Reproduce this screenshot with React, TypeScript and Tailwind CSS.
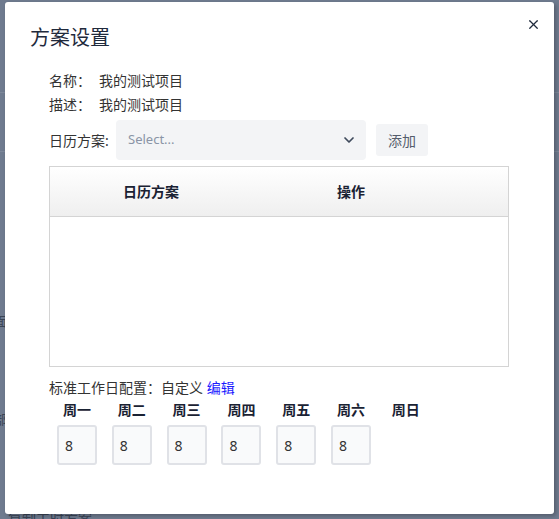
import React from 'react';
import { ChevronDown, X } from 'lucide-react';

const days = ['周一', '周二', '周三', '周四', '周五', '周六', '周日'];
const hours = ['8', '8', '8', '8', '8', '8'];

const font = { fontFamily: '"Noto Sans", "Noto Sans CJK SC", sans-serif' };

const App: React.FC = () => {
  return (
    <div className="relative w-[559px] h-[519px] overflow-hidden bg-[#6f7b8f]" style={font}>
      {/* dimmed page behind the dialog */}
      <div className="absolute inset-0">
        <div className="h-[93px] border-b border-[#7d889a]" />
        <div className="h-[59px] border-b border-[#7d889a]" />
        <div className="absolute left-[-6px] top-[312px] text-[13px] text-[#3a4456]">面</div>
        <div className="absolute left-[-6px] top-[410px] text-[13px] text-[#3a4456]">部</div>
        <div className="absolute left-[8px] top-[508px] text-[14px] text-[#3a4456]">复制工时方案</div>
      </div>

      {/* dialog */}
      <div className="absolute left-[5px] top-[2px] w-[549px] h-[512px] bg-white rounded-[3px] shadow-[2px_2px_4px_rgba(0,0,0,0.25)]">
        <button className="absolute right-[13px] top-[15px] text-[#1f2a3c]">
          <X size={15} strokeWidth={2} />
        </button>

        <div className="pl-[25px] pt-[22px]">
          <h2 className="text-[20px] leading-[28px] text-[#1f2a3c]">方案设置</h2>
        </div>

        <div className="pl-[44px] pt-[16px] text-[14px] text-[#333]">
          <div className="flex h-[24px] items-center">
            <span className="w-[50px]">名称：</span>
            <span>我的测试项目</span>
          </div>
          <div className="flex h-[24px] items-center">
            <span className="w-[50px]">描述：</span>
            <span>我的测试项目</span>
          </div>

          <div className="mt-[4px] flex items-center">
            <span className="w-[67px]">日历方案:</span>
            <div className="flex h-[40px] w-[250px] items-center justify-between rounded-[4px] bg-[#f3f4f6] pl-[12px] pr-[9px]">
              <span className="text-[13px] text-[#8a94a6]">Select...</span>
              <ChevronDown size={16} strokeWidth={2.6} className="text-[#3f4a5c]" />
            </div>
            <button className="ml-[10px] h-[32px] w-[52px] rounded-[3px] bg-[#f3f4f6] text-[#555d6b]">添加</button>
          </div>

          <div className="mt-[6px] h-[201px] w-[460px] border border-[#d4d4d4]">
            <div className="flex h-[50px] items-center border-b border-[#d4d4d4] bg-gradient-to-b from-white to-[#efefef] font-bold text-[#1a2233]">
              <div className="w-[202px] text-center">日历方案</div>
              <div className="w-[198px] text-center">操作</div>
            </div>
          </div>

          <div className="mt-[11px] h-[20px] leading-[20px] text-[#333]">
            标准工作日配置：自定义 <span className="text-[#1a1aff]">编辑</span>
          </div>

          <div className="ml-[8px] mt-[2px] flex gap-[14.8px]">
            {days.map((d, i) => (
              <div key={d} className="flex w-[40px] flex-col items-center">
                <div className="h-[20px] whitespace-nowrap font-bold leading-[20px] text-[#1a2233]">{d}</div>
                {hours[i] !== undefined && (
                  <div className="mt-[5px] flex h-[40px] w-[40px] items-center rounded-[3px] border-2 border-[#e0e2e7] bg-[#f9fafb] pl-[6px] text-[#333]">
                    {hours[i]}
                  </div>
                )}
              </div>
            ))}
          </div>
        </div>
      </div>
    </div>
  );
};

export default App;
